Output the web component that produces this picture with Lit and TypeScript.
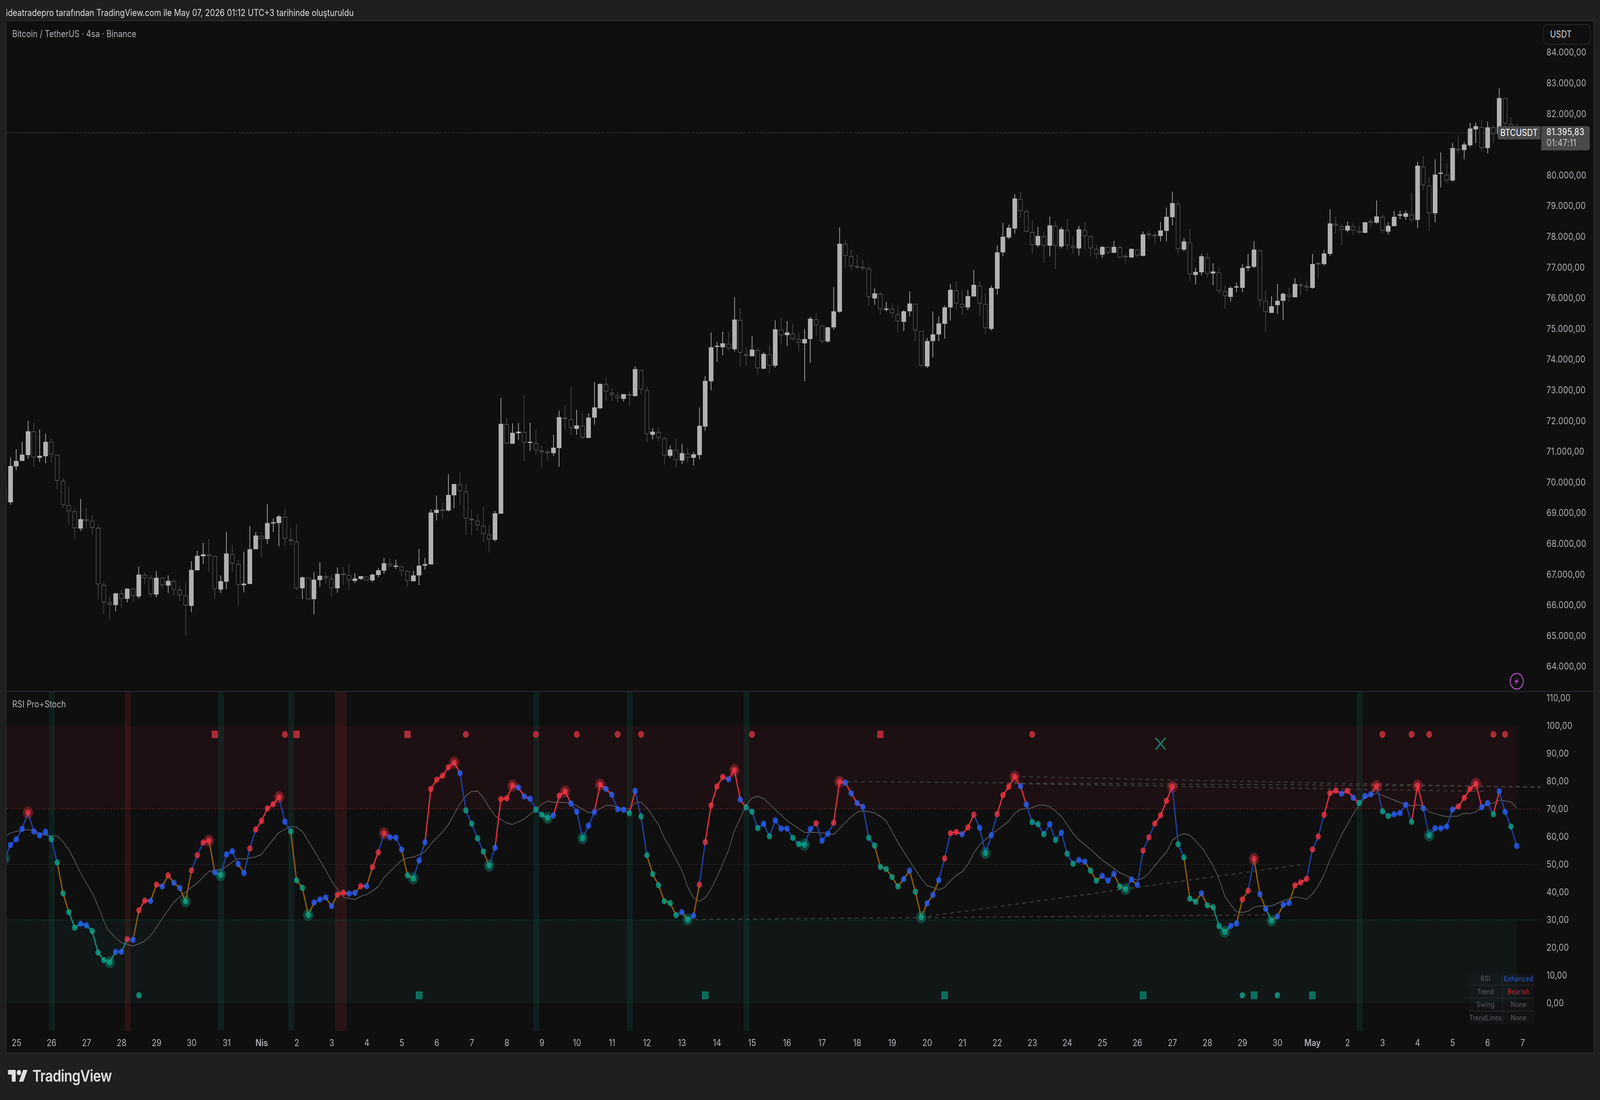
import { LitElement, html, svg, css } from 'lit';
import { customElement } from 'lit/decorators.js';

// the reference is this wide; narrower windows squeeze the whole stage to fit
const STAGE_WIDTH = 4842;

// bar geometry, page pixels
const barX = (i: number) => 31.7 + i * 17.668;

// candles: F = filled, H = hollow, then body top, body bottom, wick top, wick bottom
// y values are traced per stretch of the chart, each with its own origin and scale
const CANDLES = [
  { start: -1, y0: 1050, k: 2.851, rows: 'H560,672,560,672 F408,672,345,690 F371,410,285,438 F325,372,231,372 F154,327,77,353 H155,346,92,412 F334,347,140,378 F231,335,174,388 H232,326,208,381 H326,515,326,575 H515,694,500,712 H694,739,559,838 H739,862,718,946 F795,863,647,881 H796,809,716,860 H808,859,767,911 H859,1272,838,1376 H1273,1404,1254,1487 H1404,1421,1363,1530 F1337,1422,1334,1467 H1338,1376,1311,1442 F1303,1376,1300,1402 H1304,1358,1300,1399 F1200,1359,1140,1373 H1201,1225,1183,1271 H1224,1344,1203,1365 F1223,1345,1175,1365 H1224,1278,1217,1302 F1246,1279,1206,1333 H1247,1312,1232,1353 H1312,1352,1280,1393 H1352,1426,1252,1645 F1166,1427,1103,1473 F1063,1168,1026,1170 F1052,1065,969,1122 H1053,1065,941,1182 H1064,1307,1060,1376 F1249,1308,1206,1333 F1046,1251,889,1305' },
  { start: 38, y0: 1000, k: 1.005, rows: 'H420,445,397,465 H446,500,435,553 F496,500,414,519 F408,497,349,497 F373,408,364,408 H374,382,366,428 F341,382,292,394 F339,341,329,364 F324,341,320,401 H325,381,304,400 H383,387,354,398 H388,509,344,514 F480,509,478,536 H481,537,480,540 F486,537,466,576 F476,487,441,506 H477,482,467,496 H483,509,474,531 F471,509,455,520 H470,472,452,500 H474,488,445,513 F483,489,469,494 F477,484,477,487 H478,488,478,488 F473,488,470,492 F462,474,456,480 F444,463,430,471 H445,452,432,453 F450,452,435,459 H452,463,451,477 H464,489,461,505 F475,490,463,490 F450,475,407,500 F446,450,430,460 F314,447,306,447 F307,315,270,334 H306,308,288,331 F268,309,215,311 F240,269,240,303 H241,258,210,294 H259,329,239,371 H330,334,307,373 H335,347,319,361 H348,369,298,389 H370,383,347,416 F316,384,310,388 F85,317,19,317 H86,136,70,139 F109,137,84,137 F106,110,83,127 H107,134,12,181 F132,135,82,156 H135,153,100,165 H154,159,143,200 H157,158,150,182 F147,161,114,168' },
  { start: 94, y0: 620, k: 0.808, rows: 'F362,426,348,465 H363,365,336,388 H366,385,298,398 F379,386,347,398 H380,404,354,407 F363,405,354,406 F342,363,289,377 F293,343,292,346 H293,309,280,327 H311,316,302,328 H317,322,310,332 F314,324,314,330 H314,317,309,339 F263,318,257,319 H264,305,264,314 H306,397,299,414 F392,398,385,408 H393,405,383,412 H406,441,403,460 F429,442,420,446 H430,451,406,466 F436,452,417,459 H437,446,425,456 F439,446,434,462 F380,440,342,449 F287,381,277,390 F217,288,187,306 F214,216,206,247 F209,217,185,234 H210,220,186,224 F160,221,114,226 H161,229,137,257 H231,235,217,256 F222,236,194,236 H223,261,218,274 F231,262,228,262 H232,255,212,271 F180,255,162,259 H181,192,154,211 F187,192,163,215 H189,200,169,204 H200,208,187,226 F200,209,179,288 F158,200,154,250 H159,171,146,194 H172,205,172,209 F176,205,175,208 F143,176,93,181 F3,144,-31,146 H3,28,-5,53 H29,49,15,59 H49,52,27,56 H51,52,36,60 H54,114,50,132 F106,116,95,129' },
  { start: 149, y0: 440, k: 0.7396, rows: 'H231,260,228,271 F259,261,246,264 H259,268,249,276 H269,283,253,304 F264,284,262,302 F249,264,226,274 H250,300,250,320 H301,367,301,370 F320,368,314,371 F308,320,265,351 F287,308,274,320 F257,288,253,316 F223,257,212,281 H224,249,207,261 H250,257,225,271 F235,257,223,262 F214,236,186,236 H215,249,207,273 H250,296,229,307 F220,297,215,300 F152,221,139,232 F123,152,97,160 F106,124,100,127 F50,107,42,117 H51,74,38,87 H75,113,70,115 H114,138,90,155 F121,139,104,143 H122,140,113,172 F101,140,85,160 H102,140,94,184 F109,141,104,145 H110,139,89,149 H140,144,121,155 F109,145,102,158 H110,122,95,148 H122,145,120,160 H146,156,138,166 F142,157,140,163 H142,153,141,155 F142,153,130,154 H143,162,139,164 H159,161,155,174 F146,162,145,163 H147,158,145,163 F118,159,113,160 H117,118,112,128 H119,121,115,137 F111,121,95,132 F85,112,67,132 F59,86,38,101 H60,146,55,155 F132,147,125,150 H133,194,108,207 F189,195,182,213 F160,190,155,196' },
  { start: 205, y0: 200, k: 0.6644, rows: 'H305,333,297,339 F329,332,315,352 H330,362,322,367 H363,371,353,392 F357,372,354,380 F354,356,348,364 F323,357,316,364 F320,323,299,328 F292,321,277,323 H293,378,292,390 H379,398,361,431 F388,399,371,399 F379,386,350,401 F367,379,365,411 H368,372,357,380 F350,373,340,373 H351,353,348,369 H353,356,345,363 F316,357,299,358 H314,315,313,341 F298,316,292,319 F247,299,223,302 H248,251,236,264 H252,258,248,284 F251,259,244,262 H252,259,247,267 H260,263,250,265 F245,263,245,264 H243,245,238,254 F235,246,208,247 H236,260,232,265 F251,261,245,266 F236,252,226,252 F232,234,225,240 F230,236,225,241 H232,241,195,245 F149,241,142,255 H150,182,133,191 H183,230,169,260 F164,230,138,245 F161,163,126,186 H164,174,145,179 F119,174,110,176 H120,122,97,128 F113,122,109,138 F86,114,76,117 F82,87,76,110 H83,119,72,124 F84,119,74,128 H84,95,80,110' },
  { start: 255, y0: 0, k: 1, rows: 'F251,343,226,343 H251,316,250,359 H317,342,300,345 H337,341,316,345' },
];

// rsi: y, dot colour (R B T), colour of the line coming in (r b o t), * for a swing ring
const RSI = [
  { start: -1, y0: 1760, k: 2.529, rows: '1105Tt* 1020Bb 983Bb 915Bb 810Rb* 932Bb 958Bb 934Bb 982Tb 1133Tb 1332To 1454To 1555Tt 1530Bt 1540Bt 1577Tt 1716Tt 1765Tt 1779Tt* 1711Bt 1711Bb 1630Rt 1634Bb 1442Ro 1380Rr 1382Br 1276Ro 1288Bo 1216Ro 1265Bo 1298Bo 1385To* 1184Ro 1086Rb 1004Rb 991Rr* 1197Bo 1214To*' },
  { start: 37, y0: 1000, k: 1.005, rows: '1193Bb 1185Bb 1218Bb 1241Bo 1178Rb 1129Rb 1107Rr 1075Rr 1064Rr 1046Rr* 1109Bb 1134Tb 1260To 1279To 1349To* 1317Bo 1309Bb 1304Bb 1326Bo 1297Ro 1292Rr 1294Br 1292Bb 1275Ro 1275Br 1226Ro 1188Rr 1139Rb* 1149Bb 1150Bb 1181Bb 1247To 1255To* 1209Bb 1162Bb 1025Rr 1001Rr 991Rr 969Rr 957Rr* 984Br 1080Tb 1114Tb 1152Tb 1186Tb 1222To* 1176Bb 1051Rr 1049Rr 1016Rr* 1021Br 1044Br 1050Br 1078Tb 1091Tb 1099Tt* 1093Bb' },
  { start: 94, y0: 620, k: 0.808, rows: '1145Rr 1136Rr* 1161Br 1178Bb 1233Tb* 1207Bb 1179Bb 1122Rr* 1131Br 1143Br 1173Bb 1174Bb 1181Tb 1135Br 1188Tb 1268Tb 1307To 1330To 1363To 1367To 1392To 1386Bb 1401To* 1393Bb 1329Ro 1241Rb 1165Rr 1126Rr 1106Rr 1111Br 1092Rr* 1153Br 1169Tr 1178Tb 1212Tb 1203Bb 1229Tb 1196Bb 1213Bb 1213Bb 1232Tb 1245Tb 1246Tt* 1214Bb 1202Rb 1238Bb 1224Bb 1201Rb 1116Rr* 1118Br 1140Br 1160Br 1168Br 1232Tb 1248Tb' },
  { start: 149, y0: 440, k: 0.7396, rows: '1316To 1320To 1335To 1353To 1339Bo 1323Bo 1363To 1411To* 1385Bo 1369Bo 1341Bo 1300Rb 1252Rb 1250Rr 1254Br 1241Rr 1217Rr 1242Bb 1290Tb* 1256Bb 1216Rb 1180Rr 1164Rr 1145Rr* 1163Br 1198Br 1231Tb 1235Tb 1254Tb 1235Bb 1265Tb 1251Bb 1291Tb 1310Tb 1303Bb 1306Bb 1323To 1342To 1333Bo 1342Bb 1329Bb 1353To 1358To* 1340Bb 1350Bo 1285Rb 1260Rb 1234Rb 1218Rr 1191Rr 1164Rr* 1273Tb 1298Tb 1376To 1382Tt 1366Bo' },
  { start: 205, y0: 200, k: 0.6644, rows: '1407To 1410To 1442Tt 1452Tt* 1442Bt 1438Bb 1397Ro 1382Ro 1328Rb* 1388Bo 1413Bo 1433Tt* 1426Bo 1406Bo 1403Bb 1373Ro 1368Rr 1362Rr 1312Rb 1290Rb 1253Rb 1216Rr 1212Rr 1217Br 1212Rr 1224Br 1233Tr 1221Bb 1218Bb 1204Rr* 1247Tb 1255Tb 1252Bb 1250Bb 1236Bb 1265Tb 1203Rr* 1242Br 1288Tb* 1276Bb 1276Bb 1273Bb 1244Bb 1239Rr 1224Rr 1209Rr 1200Rr* 1240Br 1233Bb 1252Tb 1213Br 1248Bb 1273Tb 1306Bb' },
];

// the slow average drawn over the rsi
const AVERAGE = [
  { x0: 0, sx: 1.96, y0: 1760, sy: 2.529, pts: '40,958 60,943 100,930 165,920 200,925 250,950 275,958 340,962 375,1000 410,1055 440,1115 475,1195 510,1262 550,1335 580,1410 615,1510 640,1568' },
  { x0: 0, sx: 1.96, y0: 2380, sy: 3, pts: '680,55 720,100 790,125 850,93 890,50 918,2' },
  { x0: 0, sx: 1.96, y0: 1760, sy: 2.529, pts: '960,1500 1030,1390 1100,1325 1170,1265 1240,1190 1320,1175 1410,1107 1450,1110 1510,1098 1550,1082' },
  { x0: 680, sx: 1.568, y0: 1000, sy: 1.005, pts: '200,1175 255,1138 313,1121 340,1123 370,1135 480,1234 510,1265 565,1304 618,1309 645,1301 675,1296 705,1286 730,1275 757,1252 840,1208 870,1202 897,1200 950,1187 980,1165 1035,1135 1062,1116 1117,1062 1145,1042 1172,1031 1200,1030 1228,1048 1256,1073 1283,1094 1311,1103 1339,1113 1366,1116 1422,1102 1477,1078 1505,1064 1532,1056 1568,1060' },
  { x0: 1660, sx: 1.568, y0: 620, sy: 0.808, pts: '31,1158 107,1160 134,1166 190,1180 218,1178 273,1165 301,1165 328,1170 384,1172 411,1160 439,1158 467,1170 522,1205 550,1233 578,1254 633,1300 660,1333 688,1357 716,1363 744,1356 771,1338 799,1313 854,1258 882,1217 910,1192 937,1165 965,1150 993,1146 1021,1151 1076,1174 1104,1185 1132,1197 1187,1213 1215,1221 1270,1221 1298,1222 1353,1225 1381,1213 1409,1200 1436,1189 1464,1179 1492,1176 1547,1180 1568,1187' },
  { x0: 2640, sx: 1.568, y0: 440, sy: 0.7396, pts: '31,1218 66,1229 122,1270 177,1305 232,1338 260,1351 315,1359 343,1355 371,1342 398,1332 426,1325 454,1311 481,1290 509,1274 565,1254 620,1238 648,1229 676,1214 703,1207 759,1204 787,1199 814,1199 842,1202 897,1220 953,1253 980,1265 1036,1283 1091,1303 1147,1319 1174,1327 1230,1337 1258,1341 1285,1337 1313,1327 1368,1300 1396,1288 1424,1265 1451,1257 1479,1253 1507,1256 1535,1267 1568,1282' },
  { x0: 3620, sx: 1.568, y0: 200, sy: 0.6644, pts: '30,1310 81,1340 108,1362 136,1392 164,1406 191,1418 219,1419 247,1417 274,1410 302,1408 358,1408 413,1399 468,1393 496,1394 524,1397 552,1387 579,1374 607,1355 635,1329 690,1287 746,1251 773,1236 801,1224 856,1216 884,1220 939,1228 967,1232 1022,1238 1050,1236 1078,1238 1105,1248 1161,1254 1188,1256 1244,1255 1272,1250 1299,1251 1327,1248 1355,1240 1383,1236 1410,1233 1438,1228 1493,1231 1521,1241' },
];

const DOT = { R: '#f23645', B: '#2962ff', T: '#0ba88c' } as Record<string, string>;
const LINE = { r: '#d9303f', b: '#1f3f9e', o: '#8c5a0a', t: '#0d8a74' } as Record<string, string>;

const GREEN_BARS = [7, 36, 48, 90, 106, 126, 231];
const RED_BARS = [20, 56, 57];
const TOP_SQUARES = [35, 49, 68, 149];
const TOP_CIRCLES = [47, 78, 90, 97, 104, 108, 127, 175, 235, 240, 243, 254, 256];
const BOTTOM_SQUARES = [70, 119, 160, 194, 213, 223];
const BOTTOM_CIRCLES = [22, 211, 217];

const TREND_LINES = [
  [2081, 2354, 3830, 2342],
  [2788, 2348, 3933, 2214],
  [2541, 2001, 4662, 2014],
  [3071, 1988, 4662, 2016],
  [3071, 2006, 4500, 2026],
];

// 81.000 sits behind the last price tag, so its row stays empty
const PRICES = ['84', '83', '82', '', '80', '79', '78', '77', '76', '75', '74', '73', '72', '71', '70', '69', '68', '67', '66', '65', '64'];
const RSI_TICKS = ['110,00', '100,00', '90,00', '80,00', '70,00', '60,00', '50,00', '40,00', '30,00', '20,00', '10,00', '0,00'];
const DAYS = ['25', '26', '27', '28', '29', '30', '31', 'Nis',
  ...Array.from({ length: 29 }, (_, i) => String(i + 2)),
  'May', '2', '3', '4', '5', '6', '7'];
const STATUS = [
  ['RSI', 'Enhanced', 'blue'],
  ['Trend', 'Bearish', 'red'],
  ['Swing', 'None', ''],
  ['TrendLines', 'None', ''],
];

function candleShapes() {
  let filled = '';
  let hollow = '';
  let wicksUp = '';
  let wicksDown = '';
  for (const seg of CANDLES) {
    seg.rows.split(' ').forEach((row, n) => {
      const up = row[0] === 'F';
      const [top, bot, hi, lo] = row.slice(1).split(',').map((v) => Math.round(seg.y0 + Number(v) / seg.k));
      const x = Math.round(barX(seg.start + n));
      const wick = `M${x - 1} ${hi}h2V${lo}h-2z`;
      if (up) {
        wicksUp += wick;
        filled += `M${x - 7} ${top}h14V${Math.max(bot, top + 3)}h-14z`;
      } else {
        wicksDown += `M${x - 1} ${hi}h2V${top}h-2z M${x - 1} ${bot}h2V${lo}h-2z`;
        const h = Math.max(bot - top - 2, 2);
        hollow += `M${x - 6} ${top + 1}h12v${h}h-12z`;
      }
    });
  }
  return { filled, hollow, wicksUp, wicksDown };
}

function rsiPoints() {
  const pts: { x: number; y: number; dot: string; line: string; ring: boolean }[] = [];
  for (const seg of RSI) {
    seg.rows.split(' ').forEach((row, n) => {
      const m = row.match(/^(\d+)([RBT])([rbot])(\*?)$/)!;
      pts.push({
        x: barX(seg.start + n),
        y: seg.y0 + Number(m[1]) / seg.k,
        dot: DOT[m[2]],
        line: LINE[m[3]],
        ring: m[4] === '*',
      });
    });
  }
  return pts;
}

function averagePoints() {
  return AVERAGE.map((seg) =>
    seg.pts.split(' ').map((p) => {
      const [x, y] = p.split(',').map(Number);
      return `${(seg.x0 + x / seg.sx).toFixed(1)},${(seg.y0 + y / seg.sy).toFixed(1)}`;
    }).join(' ')
  ).join(' ');
}

@customElement('app-root')
export class AppRoot extends LitElement {
  static styles = css`
    :host {
      display: block;
      height: 2816px;
      background: #1f1f1f;
      font-family: Inter, 'Liberation Sans', sans-serif;
      font-size: 24px;
      color: #aeb0b6;
      overflow: hidden;
    }
    .stage {
      width: 4842px;
      height: 2816px;
      transform-origin: 0 0;
    }
    .caption {
      box-sizing: border-box;
      height: 52px;
      padding: 18px 0 0 18px;
      line-height: 30px;
      color: #dcdcdc;
      white-space: nowrap;
    }
    .frame {
      width: 4802px;
      margin-left: 18px;
      border: 2px solid #2c2c2c;
      background: #0f0f0f;
    }
    .pane {
      position: relative;
      display: grid;
      grid-template-columns: 4642px 160px;
      overflow: hidden;
    }
    .price-pane {
      height: 1715px;
      border-bottom: 2px solid #2a2e39;
    }
    .rsi-pane {
      height: 868px;
    }
    .plot {
      display: block;
    }
    .legend {
      position: absolute;
      left: 17px;
      line-height: 28px;
      color: #aeb0b6;
      letter-spacing: -0.1px;
      white-space: nowrap;
    }
    .price-pane .legend { top: 19px; }
    .rsi-pane .legend { top: 18px; }
    .scale { padding-left: 18px; }
    .price-scale { padding-top: 40.7px; }
    .rsi-scale { margin-top: -20.5px; }
    .tick {
      display: flex;
      align-items: center;
      letter-spacing: 0.4px;
    }
    .price-scale .tick { height: 78.6px; }
    .rsi-scale .tick { height: 71px; }
    .currency {
      position: absolute;
      top: 8px;
      left: 4650px;
      box-sizing: border-box;
      width: 144px;
      height: 52px;
      padding-left: 19px;
      border: 2px solid #2a2a2a;
      border-radius: 12px;
      background: #0f0f0f;
      color: #d6d6d6;
      line-height: 48px;
    }
    .symbol-tag {
      position: absolute;
      top: 269px;
      left: 4512px;
      width: 130px;
      height: 34px;
      border-radius: 6px 0 0 6px;
      background: #4a4a4a;
      color: #fff;
      line-height: 34px;
      text-align: center;
      letter-spacing: 0.2px;
    }
    .price-tag {
      position: absolute;
      top: 269px;
      left: 4644px;
      box-sizing: border-box;
      width: 147px;
      height: 62px;
      padding: 1px 0 0 16px;
      border-radius: 0 6px 6px 0;
      background: #4a4a4a;
      color: #fff;
      line-height: 28px;
      letter-spacing: 0.5px;
    }
    .price-tag .countdown { color: #c6c6c6; }
    .status {
      position: absolute;
      top: 719px;
      left: 4425px;
      display: grid;
      grid-template-columns: 103px 95px;
      grid-auto-rows: 33px;
      background: rgba(42, 46, 57, 0.16);
      font-size: 18px;
      letter-spacing: 0.4px;
      color: #5f6168;
    }
    .status div {
      display: flex;
      align-items: center;
      justify-content: center;
      box-sizing: border-box;
      border-bottom: 2px solid #23272b;
    }
    .status div:nth-child(odd) { border-right: 2px solid #23272b; }
    .status div:nth-last-child(-n + 2) { border-bottom: 0; }
    .status .blue { color: #2a5bdc; }
    .status .red { color: #c62c3c; }
    .time-axis {
      display: flex;
      gap: 46px;
      height: 56px;
      padding-top: 4px;
      box-sizing: border-box;
      align-items: center;
      white-space: nowrap;
    }
    .day {
      flex: none;
      width: 60px;
      text-align: center;
      color: #b0b2b8;
    }
    .day.month { font-weight: 600; }
    .brand {
      display: flex;
      align-items: center;
      gap: 14px;
      margin: 42px 0 0 24px;
      color: #e0e0e0;
    }
    .brand svg { flex: none; }
    .brand span {
      font-size: 41px;
      line-height: 30px;
      font-weight: 600;
      letter-spacing: -0.9px;
    }
  `;

  private renderPricePlot() {
    const c = candleShapes();
    return html`<svg class="plot" width="4642" height="1715" viewBox="20 54 4642 1715">
      <path d=${c.wicksDown} fill="#4a4a4a"></path>
      <path d=${c.hollow} fill="none" stroke="#4a4a4a" stroke-width="2"></path>
      <path d=${c.wicksUp} fill="#b2b2b2"></path>
      <path d=${c.filled} fill="#b2b2b2"></path>
      <line x1="20" y1="340" x2="4532" y2="340" stroke="#5a5a5a" stroke-width="2" stroke-dasharray="2 6"></line>
      <circle cx="4590" cy="1744" r="20" fill="none" stroke="#ab47bc" stroke-width="3"></circle>
      <path d="M4595 1734l-13 12h7l-6 9 14-13h-8z" fill="#ab47bc"></path>
    </svg>`;
  }

  private renderRsiPlot() {
    const pts = rsiPoints();
    const top = 1880;
    const bottom = 2548;
    return html`<svg class="plot" width="4642" height="868" viewBox="20 1771 4642 868">
      <rect x="20" y="1858" width="4570" height="213" fill="#1c1012"></rect>
      <rect x="20" y="2355" width="4570" height="213" fill="#101716"></rect>
      ${GREEN_BARS.map((i) => svg`<rect x=${barX(i) - 7.5} y="1771" width="17.7" height="868" fill="rgba(8,153,129,.12)"></rect>`)}
      ${RED_BARS.map((i) => svg`<rect x=${barX(i) - 7.5} y="1771" width="17.7" height="868" fill="rgba(242,54,69,.12)"></rect>`)}
      <line x1="20" y1="2071" x2="4660" y2="2071" stroke="#7a2530" stroke-width="2" stroke-dasharray="3 6"></line>
      <line x1="20" y1="2213" x2="4660" y2="2213" stroke="#2f3331" stroke-width="2" stroke-dasharray="3 6"></line>
      <line x1="20" y1="2355" x2="4660" y2="2355" stroke="#0d4a3c" stroke-width="2" stroke-dasharray="3 6"></line>
      ${TREND_LINES.map(([x1, y1, x2, y2]) => svg`<line x1=${x1} y1=${y1} x2=${x2} y2=${y2} stroke="#404040" stroke-width="2.5" stroke-dasharray="11 11"></line>`)}
      ${TOP_SQUARES.map((i) => svg`<rect x=${barX(i) - 8.5} y=${top - 8.5} width="17" height="17" fill="#ad2a37" stroke="#c42f3e" stroke-width="1.5"></rect>`)}
      ${TOP_CIRCLES.map((i) => svg`<circle cx=${barX(i)} cy=${top} r="8" fill="#ad2a37" stroke="#c42f3e" stroke-width="1.5"></circle>`)}
      ${BOTTOM_SQUARES.map((i) => svg`<rect x=${barX(i) - 9} y=${bottom - 9} width="18" height="18" fill="#0b6b5c" stroke="#0c8a73" stroke-width="1.5"></rect>`)}
      ${BOTTOM_CIRCLES.map((i) => svg`<circle cx=${barX(i)} cy=${bottom} r="8" fill="#0b8a73"></circle>`)}
      <path d="M3497 1889l30 30M3527 1889l-30 30" fill="none" stroke="#0e8d76" stroke-width="3.5"></path>
      <polyline points=${averagePoints()} fill="none" stroke="#606060" stroke-width="2" stroke-linejoin="round"></polyline>
      ${pts.slice(1).map((p, n) => svg`<line x1=${pts[n].x} y1=${pts[n].y} x2=${p.x} y2=${p.y} stroke=${p.line} stroke-width="4" stroke-linecap="round"></line>`)}
      ${pts.filter((p) => p.ring).map((p) => svg`<circle cx=${p.x} cy=${p.y} r="15" fill=${p.dot} fill-opacity=".33" stroke=${p.dot} stroke-opacity=".2"></circle>`)}
      ${pts.map((p) => svg`<circle cx=${p.x} cy=${p.y} r="7.5" fill=${p.dot} fill-opacity=".75" stroke=${p.dot} stroke-opacity=".5" stroke-width="1.5"></circle>`)}
    </svg>`;
  }

  render() {
    const fit = Math.min(1, window.innerWidth / STAGE_WIDTH);
    return html`
      <div class="stage" style="transform: scaleX(${fit})">
        <div class="caption">ideatradepro tarafından TradingView.com ile May 07, 2026 01:12 UTC+3 tarihinde oluşturuldu</div>
        <div class="frame">
          <div class="pane price-pane">
            ${this.renderPricePlot()}
            <div class="scale price-scale">
              ${PRICES.map((p) => html`<div class="tick">${p ? `${p}.000,00` : ''}</div>`)}
            </div>
            <div class="legend">Bitcoin / TetherUS · 4sa · Binance</div>
            <div class="currency">USDT</div>
            <div class="symbol-tag">BTCUSDT</div>
            <div class="price-tag">81.395,83<br /><span class="countdown">01:47:11</span></div>
          </div>
          <div class="pane rsi-pane">
            ${this.renderRsiPlot()}
            <div class="scale rsi-scale">
              ${RSI_TICKS.map((t) => html`<div class="tick">${t}</div>`)}
            </div>
            <div class="legend">RSI Pro+Stoch</div>
            <div class="status">
              ${STATUS.map(([name, value, tone]) => html`<div>${name}</div><div class=${tone}>${value}</div>`)}
            </div>
          </div>
          <div class="time-axis">
            ${DAYS.map((d) => html`<div class="day ${d === 'Nis' || d === 'May' ? 'month' : ''}">${d}</div>`)}
          </div>
        </div>
        <div class="brand">
          <svg width="60" height="30" viewBox="0 4 36 18" fill="currentColor">
            <path d="M14 22H7V11H0V4h14v18zM28 22h-8l7.5-18h8L28 22z"></path>
            <circle cx="20" cy="8" r="4"></circle>
          </svg>
          <span>TradingView</span>
        </div>
      </div>
    `;
  }
}
